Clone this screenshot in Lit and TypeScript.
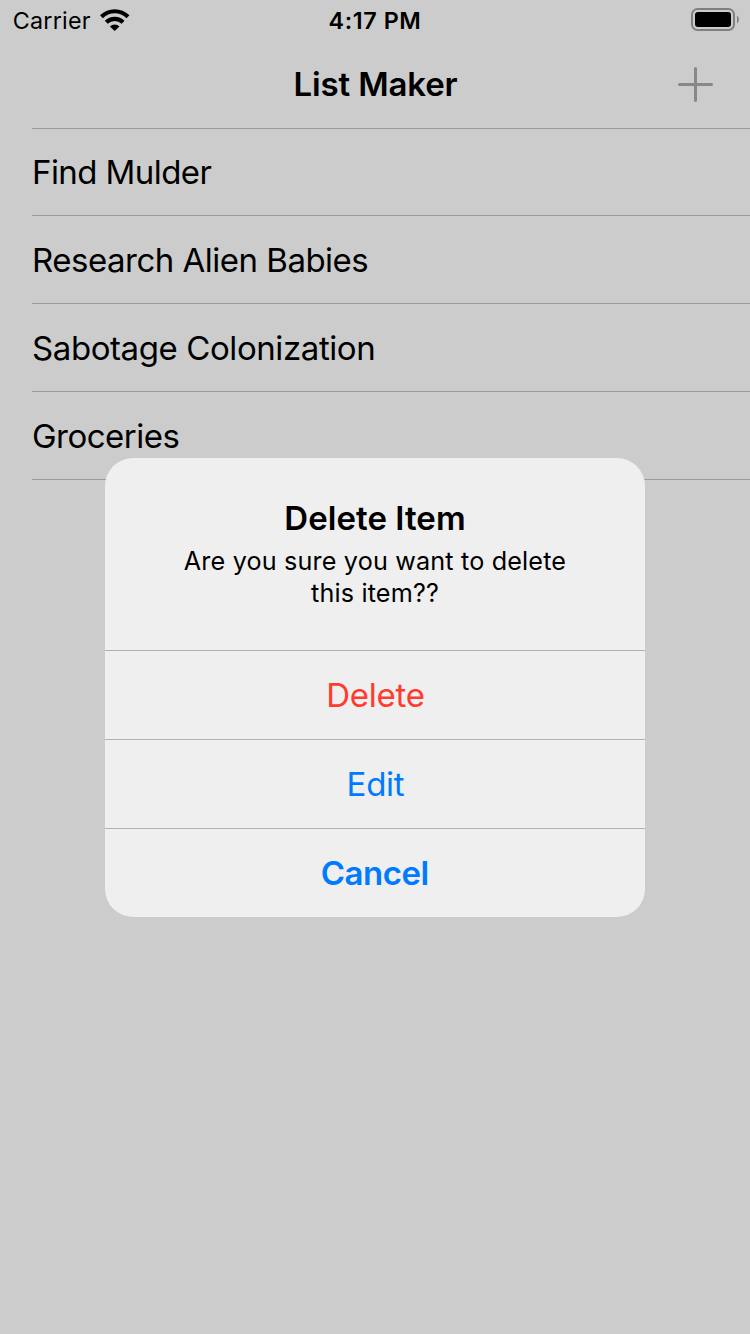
import { LitElement, html, css } from "lit";
import { customElement, property } from "lit/decorators.js";
import { classMap } from "lit/directives/class-map.js";
import { styleMap } from "lit/directives/style-map.js";

@customElement("status-bar")
class StatusBar extends LitElement {
  static styles = css`
    :host {
      display: grid;
      grid-template-columns: 1fr auto 1fr;
      height: 40px;
      line-height: 41px;
      font-size: 23.3px;
    }
    .left {
      display: flex;
      padding-left: 12.7px;
    }
    .carrier {
      width: 77.3px;
      letter-spacing: 0.25px;
    }
    .wifi {
      width: 30px;
      height: 22px;
      margin: 9px 0 0 10px;
    }
    .time {
      font-weight: 600;
      letter-spacing: 0.6px;
    }
    .right {
      display: flex;
      justify-content: flex-end;
      padding: 8px 11px 0 0;
    }
    .battery {
      width: 48px;
      height: 23px;
    }
  `;
  render() {
    return html`
      <div class="left">
        <span class="carrier">Carrier</span>
        <svg class="wifi" viewBox="0 0 30 22">
          <path d="M1.4 7.7C9 .4 20.4 .4 28 7.7" fill="none" stroke="#000" stroke-width="4.2" />
          <path d="M6.3 13.2C11 8.7 18.4 8.7 23.1 13.2" fill="none" stroke="#000" stroke-width="4.2" />
          <path d="M9.9 17.6C12.6 14.8 16.8 14.8 19.5 17.6L14.7 22Z" />
        </svg>
      </div>
      <span class="time">4:17 PM</span>
      <div class="right">
        <svg class="battery" viewBox="0 0 48 23">
          <rect x="1" y="1" width="42" height="21" rx="5.5" fill="none" stroke="#808080" stroke-width="2" />
          <rect x="4" y="4" width="36" height="15" rx="3" />
          <path d="M46 7.5C48.4 9 48.4 14 46 15.5Z" fill="#808080" />
        </svg>
      </div>
    `;
  }
}

@customElement("alert-dialog")
class AlertDialog extends LitElement {
  @property() heading = "";
  @property() message = "";
  static styles = css`
    :host {
      display: block;
      width: 540px;
      border-radius: 28px;
      overflow: hidden;
      background: #efefef;
      text-align: center;
    }
    .copy {
      box-sizing: border-box;
      height: 192px;
      padding: 40px 70px 0;
    }
    .heading {
      font-size: 33px;
      line-height: 40px;
      font-weight: 600;
      letter-spacing: 0.05px;
    }
    .message {
      font-size: 25.2px;
      line-height: 32px;
      margin-top: 7px;
      letter-spacing: 0.16px;
    }
    .action {
      display: block;
      box-sizing: border-box;
      width: 100%;
      height: 89px;
      padding: 0;
      border: 0;
      border-top: 1px solid #b0b0b0;
      background: none;
      font: 400 33px/88px Inter, sans-serif;
      letter-spacing: -0.25px;
      text-indent: 1px;
      color: #007aff;
    }
    .destructive {
      color: #ff3b30;
    }
    .cancel {
      font-weight: 600;
      letter-spacing: -0.45px;
      text-indent: -0.6px;
    }
  `;
  render() {
    const actions = [
      { label: "Delete", kind: "destructive" },
      { label: "Edit", kind: "edit" },
      { label: "Cancel", kind: "cancel" },
    ];
    return html`
      <div class="copy">
        <div class="heading">${this.heading}</div>
        <div class="message">${this.message}</div>
      </div>
      ${actions.map(
        (a) => html`<button class=${classMap({ action: true, [a.kind]: true })}>${a.label}</button>`
      )}
    `;
  }
}

@customElement("app-root")
class AppRoot extends LitElement {
  static styles = css`
    :host {
      display: block;
      position: relative;
      height: 1334px;
      overflow: hidden;
      background: #ccc;
      color: #000;
      font-family: Inter, sans-serif;
    }
    .nav {
      display: grid;
      grid-template-columns: 1fr auto 1fr;
      align-items: center;
      height: 88px;
    }
    .title {
      grid-column: 2;
      padding-left: 1px;
      font-size: 33px;
      font-weight: 600;
      letter-spacing: -0.15px;
    }
    .add {
      justify-self: end;
      width: 37px;
      height: 36px;
      margin-right: 36px;
    }
    .list {
      margin: 0 0 0 32px;
      padding: 0;
      list-style: none;
      box-shadow: inset 0 1px #9c9c9c;
    }
    .row {
      box-sizing: border-box;
      height: 88px;
      border-bottom: 1px solid #9c9c9c;
      font-size: 33px;
      line-height: 88px;
    }
    .dialog {
      position: absolute;
      left: 105px;
      top: 458px;
    }
  `;
  render() {
    const items = [
      { text: "Find Mulder", tracking: -0.57 },
      { text: "Research Alien Babies", tracking: -0.5 },
      { text: "Sabotage Colonization", tracking: -0.41 },
      { text: "Groceries", tracking: -0.52 },
    ];
    return html`
      <status-bar></status-bar>
      <header class="nav">
        <span class="title">List Maker</span>
        <svg class="add" viewBox="0 0 37 36">
          <path d="M2.5 18.5H34.5M18.5 2.5V34.5" fill="none" stroke="#888" stroke-width="3" stroke-linecap="round" />
        </svg>
      </header>
      <ul class="list">
        ${items.map(
          (item) =>
            html`<li class="row" style=${styleMap({ letterSpacing: `${item.tracking}px` })}>${item.text}</li>`
        )}
      </ul>
      <alert-dialog
        class="dialog"
        heading="Delete Item"
        message="Are you sure you want to delete this item??"
      ></alert-dialog>
    `;
  }
}
